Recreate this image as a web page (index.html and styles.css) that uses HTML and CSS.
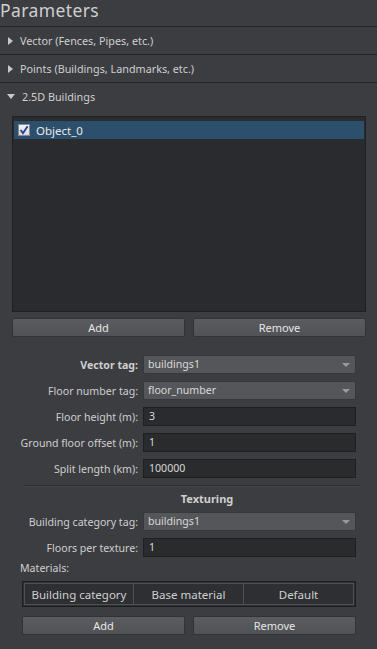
FILE: index.html
```html
<!DOCTYPE html>
<html>
<head>
<meta charset="utf-8">
<link rel="stylesheet" href="styles.css">
</head>
<body>
<div class="panel">
  <div class="title">Parameters</div>
  <div class="section"><span class="tri right"></span>Vector (Fences, Pipes, etc.)</div>
  <div class="section"><span class="tri right"></span>Points (Buildings, Landmarks, etc.)</div>
  <div class="section open"><span class="tri down"></span>2.5D Buildings</div>
  <div class="content">
    <div class="list">
      <div class="item"><span class="check"><svg width="12" height="12" viewBox="0 0 12 12"><path d="M2.6 6 L5 9.2 L9.6 2.2" fill="none" stroke="#2b3aa0" stroke-width="1.9"/></svg></span>Object_0</div>
    </div>
    <div class="btns top"><div class="btn">Add</div><div class="btn">Remove</div></div>
    <div class="form">
      <div class="row"><label class="bold">Vector tag:</label><div class="combo">buildings1<span class="arrow"></span></div></div>
      <div class="row"><label>Floor number tag:</label><div class="combo">floor_number<span class="arrow"></span></div></div>
      <div class="row"><label>Floor height (m):</label><div class="input">3</div></div>
      <div class="row"><label>Ground floor offset (m):</label><div class="input">1</div></div>
      <div class="row"><label>Split length (km):</label><div class="input">100000</div></div>
    </div>
    <div class="hr"></div>
    <div class="subhead">Texturing</div>
    <div class="form tex">
      <div class="row"><label>Building category tag:</label><div class="combo">buildings1<span class="arrow"></span></div></div>
      <div class="row"><label>Floors per texture:</label><div class="input">1</div></div>
    </div>
    <div class="mat-label">Materials:</div>
    <div class="table">
      <div class="cell">Building category</div>
      <div class="cell">Base material</div>
      <div class="cell">Default</div>
    </div>
    <div class="btns bottom"><div class="btn">Add</div><div class="btn">Remove</div></div>
  </div>
</div>
</body>
</html>
```
FILE: styles.css
```css
html, body {
  margin: 0;
  padding: 0;
  background: #3c3d41;
}
body {
  font-family: "Noto Sans", "Open Sans", sans-serif;
  font-size: 10.6px;
  color: #d4d4d4;
  width: 377px;
  height: 649px;
  overflow: hidden;
}
.title {
  font-size: 17.5px;
  letter-spacing: 0.4px;
  height: 23px;
  padding-top: 3px;
  line-height: 15px;
  color: #cfcfcf;
}
.section {
  height: 27px;
  line-height: 27px;
  border-top: 1px solid #242528;
  display: flex;
  align-items: center;
  padding-left: 7px;
  color: #cfcfcf;
  font-size: 10.8px;
}
.tri {
  display: inline-block;
  width: 0;
  height: 0;
  margin-right: 7px;
}
.tri.right {
  border-top: 4px solid transparent;
  border-bottom: 4px solid transparent;
  border-left: 5px solid #c8c8c8;
  margin-left: 1px;
}
.tri.down {
  border-left: 4px solid transparent;
  border-right: 4px solid transparent;
  border-top: 5px solid #c8c8c8;
  margin-right: 7px;
}
.content {
  padding: 6px 11px 0 12px;
}
.list {
  height: 196px;
  box-sizing: border-box;
  background: #2a2b2e;
  border: 1px solid #1f2022;
  padding-top: 4px;
}
.item {
  height: 18px;
  background: #2c4f6b;
  display: flex;
  align-items: center;
  color: #e8e8e8;
  font-size: 11.5px;
  margin: 0 1px;
}
.check {
  width: 12px;
  height: 12px;
  background: linear-gradient(#f4f4f4, #d8d8dc);
  border: 1px solid #8a8a8a;
  box-sizing: border-box;
  margin: 0 6px 0 4px;
  display: flex;
}
.check svg { margin: -1px; }
.btns {
  display: flex;
  gap: 8px;
}
.btns.top {
  margin-top: 6px;
}
.btn {
  flex: 1;
  height: 19px;
  line-height: 18px;
  text-align: center;
  background: linear-gradient(#5b5c60, #515256);
  border: 1px solid #323336;
  border-radius: 2px;
  box-sizing: border-box;
  color: #e6e6e6;
  font-size: 11px;
}
.form {
  margin-top: 18px;
  display: flex;
  flex-direction: column;
  gap: 7px;
  padding-right: 10px;
}
.row {
  display: flex;
  align-items: center;
  height: 19px;
}
.row label {
  width: 126px;
  text-align: right;
  padding-right: 5px;
  color: #cfcfcf;
}
.row label.bold {
  font-weight: bold;
}
.combo, .input {
  flex: 1;
  height: 19px;
  box-sizing: border-box;
  line-height: 17px;
  padding-left: 4px;
  border-radius: 2px;
  position: relative;
  color: #d8d8d8;
}
.combo {
  background: #55565a;
  border: 1px solid #37383b;
}
.input {
  background: #2a2b2d;
  border: 1px solid #1e1f21;
  border-radius: 0;
  padding-left: 5px;
}
.arrow {
  position: absolute;
  right: 5px;
  top: 7px;
  border-left: 4px solid transparent;
  border-right: 4px solid transparent;
  border-top: 4px solid #9a9a9e;
}
.hr {
  margin: 7px 6px 0 11px;
  border-top: 1px solid #2d2e31;
  border-bottom: 1px solid #45464a;
}
.subhead {
  text-align: center;
  font-weight: bold;
  font-size: 11px;
  height: 20px;
  line-height: 24px;
  padding-left: 36px;
  color: #cfcfcf;
}
.form.tex {
  margin-top: 5px;
}
.mat-label {
  margin-top: 4px;
  padding-left: 8px;
  height: 16px;
  line-height: 14px;
  color: #cfcfcf;
}
.table {
  margin: 4px 10px 0 10px;
  height: 26px;
  display: grid;
  grid-template-columns: 110px 110px 1fr;
  border: 1px solid #1c1d1f;
  box-sizing: border-box;
  background: #2e2f32;
  padding: 1px;
}
.cell {
  display: flex;
  align-items: center;
  justify-content: center;
  color: #cfcfcf;
  font-size: 11.5px;
  border: 1px solid #505155;
  border-left: none;
}
.cell:first-child { border-left: 1px solid #505155; }
.btns.bottom {
  margin: 9px 10px 0 10px;
}
```
